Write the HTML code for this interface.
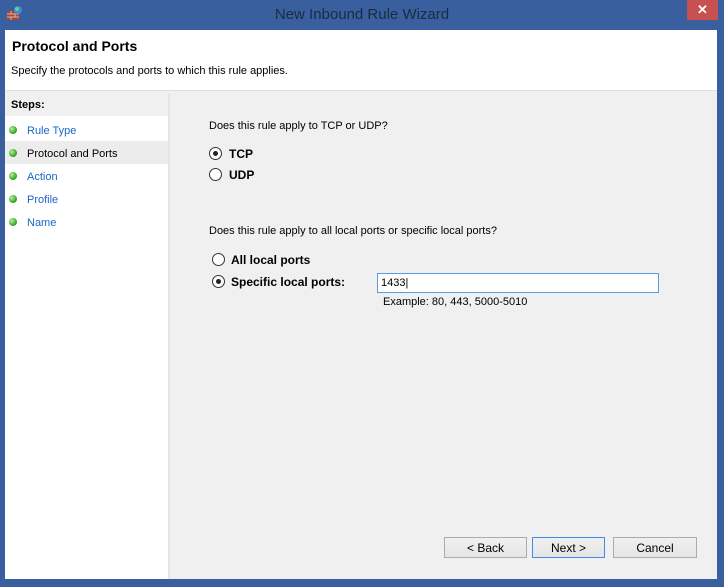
<!DOCTYPE html>
<html><head><style>
body{margin:0;width:724px;height:587px;background:#3a5f9e;position:relative;overflow:hidden;font-family:"Liberation Sans",sans-serif;font-size:11px;color:#000}
.a{position:absolute}
.title{left:0;top:6px;width:724px;text-align:center;font-size:15px;color:#1b2b45}
.close{left:687px;top:0;width:31px;height:20px;background:#c75050;color:#fff;text-align:center;font-size:13px;line-height:19px;font-weight:bold}
.client{left:5px;top:30px;width:712px;height:549px;background:#f0f0f0}
.hdr{left:5px;top:30px;width:712px;height:60px;background:#fff;border-bottom:1px solid #dfdfdf}
.steps{left:5px;top:93px;width:163px;height:486px;background:#fff;border-right:2px solid #e4e4e4}
.dot{width:8px;height:8px;border-radius:50%;background:radial-gradient(circle at 35% 35%,#b8f0a0,#3cab2a 60%,#2a8a1c)}
.lnk{color:#1a66c7}
.radio{width:11px;height:11px;border:1px solid #333;border-radius:50%;background:#fff}
.radio.on::after{content:"";position:absolute;left:3px;top:3px;width:5px;height:5px;border-radius:50%;background:#222}
.b{font-weight:bold}
.btn{height:19px;border:1px solid #acacac;background:linear-gradient(#f0f0f0,#e5e5e5);text-align:center;line-height:20px;font-size:12px}
</style></head><body>
<svg class="a" style="left:6px;top:5px" width="16" height="16"><rect x="1" y="6" width="12" height="9" fill="#a0483a"/><path d="M1 9h12M1 12h12M5 6v3M9 9v3M5 12v3" stroke="#e8b0a0" stroke-width="1"/><circle cx="12" cy="5" r="4" fill="#3b8be0"/><circle cx="11" cy="4" r="2" fill="#6fd16a"/></svg>
<div class="a title">New Inbound Rule Wizard</div>
<div class="a close">✕</div>
<div class="a client"></div>
<div class="a hdr"></div>
<div class="a b" style="left:12px;top:38px;font-size:14px">Protocol and Ports</div>
<div class="a" style="left:11px;top:65px">Specify the protocols and ports to which this rule applies.</div>
<div class="a steps"></div>
<div class="a" style="left:5px;top:93px;width:163px;height:23px;background:#f0f0f0"></div>
<div class="a b" style="left:11px;top:99px">Steps:</div>
<div class="a" style="left:5px;top:141px;width:163px;height:23px;background:#ececec"></div>
<div class="a dot" style="left:9px;top:126px"></div><div class="a lnk" style="left:27px;top:125px">Rule Type</div>
<div class="a dot" style="left:9px;top:149px"></div><div class="a" style="left:27px;top:148px">Protocol and Ports</div>
<div class="a dot" style="left:9px;top:172px"></div><div class="a lnk" style="left:27px;top:171px">Action</div>
<div class="a dot" style="left:9px;top:195px"></div><div class="a lnk" style="left:27px;top:194px">Profile</div>
<div class="a dot" style="left:9px;top:218px"></div><div class="a lnk" style="left:27px;top:217px">Name</div>

<div class="a" style="left:209px;top:120px">Does this rule apply to TCP or UDP?</div>
<div class="a radio on" style="left:209px;top:147px"></div><div class="a b" style="left:229px;top:147px;font-size:12px">TCP</div>
<div class="a radio" style="left:209px;top:168px"></div><div class="a b" style="left:229px;top:168px;font-size:12px">UDP</div>
<div class="a" style="left:209px;top:225px">Does this rule apply to all local ports or specific local ports?</div>
<div class="a radio" style="left:212px;top:253px"></div><div class="a b" style="left:231px;top:253px;font-size:12px">All local ports</div>
<div class="a radio on" style="left:212px;top:275px"></div><div class="a b" style="left:231px;top:275px;font-size:12px">Specific local ports:</div>
<div class="a" style="left:377px;top:273px;width:282px;height:20px;background:#fff;border:1px solid #569de5;line-height:19px;padding-left:3px;box-sizing:border-box">1433|</div>
<div class="a" style="left:383px;top:296px">Example: 80, 443, 5000-5010</div>

<div class="a btn" style="left:444px;top:537px;width:81px">&lt; Back</div>
<div class="a btn" style="left:532px;top:537px;width:71px;border-color:#3c8fe6">Next &gt;</div>
<div class="a btn" style="left:613px;top:537px;width:82px">Cancel</div>
</body></html>
